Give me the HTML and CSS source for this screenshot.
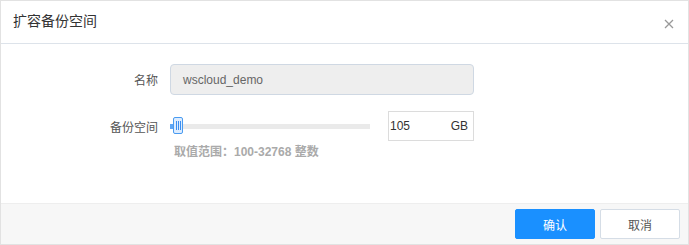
FILE: index.html
```html
<!DOCTYPE html>
<html lang="zh-CN">
<head>
<meta charset="utf-8">
<title>扩容备份空间</title>
<link rel="stylesheet" href="styles.css">
</head>
<body>
<div class="dialog">
  <div class="header">
    <span class="title">扩容备份空间</span>
    <span class="close">
      <svg width="10" height="10" viewBox="0 0 10 10"><path d="M1 1L9 9M9 1L1 9" stroke="#999" stroke-width="1.3" fill="none"/></svg>
    </span>
  </div>
  <div class="body">
    <div class="row row-name">
      <label class="label">名称</label>
      <div class="input disabled">wscloud_demo</div>
    </div>
    <div class="row row-size">
      <label class="label">备份空间</label>
      <div class="slider">
        <div class="track"><div class="fill"></div></div>
        <div class="handle"><i></i><i></i><i></i></div>
      </div>
      <div class="num-input"><span>105</span><span>GB</span></div>
    </div>
    <div class="hint">取值范围：100-32768 整数</div>
  </div>
  <div class="footer">
    <button class="btn primary">确认</button>
    <button class="btn">取消</button>
  </div>
</div>
</body>
</html>
```
FILE: styles.css
```css
* { box-sizing: border-box; }
html, body { margin: 0; padding: 0; background: #fff; }
body {
  font-family: "Liberation Sans", "Noto Sans CJK SC", Arial, sans-serif;
  font-size: 12px;
  color: #333;
}
.dialog {
  width: 689px;
  height: 245px;
  border: 1px solid #e2e2e2;
  display: flex;
  flex-direction: column;
}
.header {
  height: 43px;
  border-bottom: 1px solid #dde3ea;
  display: flex;
  align-items: center;
  justify-content: space-between;
  padding: 0 13px 0 12px;
}
.title {
  font-size: 14px;
  color: #333;
  margin-top: -4px;
}
.close { display: flex; margin-top: 3px; margin-right: 1px; }
.body {
  flex: 1;
  padding-top: 20px;
}
.row { display: flex; align-items: center; }
.label {
  width: 157px;
  text-align: right;
  color: #555;
  font-size: 12px;
  margin-right: 12px;
}
.input {
  width: 304px;
  height: 31px;
  border: 1px solid #cfd8e3;
  border-radius: 4px;
  background: #eee;
  font-size: 12px;
  color: #666;
  display: flex;
  align-items: center;
  padding-left: 12px;
}
.row-size { margin-top: 16px; }
.slider {
  position: relative;
  width: 200px;
  height: 18px;
  display: flex;
  align-items: center;
}
.track {
  width: 200px;
  height: 5px;
  background: #eaeaea;
}
.fill { width: 4px; height: 5px; background: #5ea6f5; }
.handle {
  position: absolute;
  left: 3px;
  top: 0;
  width: 10px;
  height: 17px;
  border: 1px solid #4a9bf0;
  border-radius: 2px;
  background: #dcecff;
  display: flex;
  justify-content: center;
  align-items: center;
  gap: 1px;
}
.handle i {
  display: block;
  width: 1px;
  height: 9px;
  background: #3b8ef0;
}
.num-input {
  margin-left: 18px;
  width: 86px;
  height: 30px;
  border: 1px solid #dcdcdc;
  display: flex;
  align-items: center;
  justify-content: space-between;
  padding: 0 5px 0 1px;
  font-size: 12px;
  color: #333;
}
.hint {
  margin-left: 173px;
  margin-top: 1px;
  color: #aaa;
  font-size: 12px;
  font-weight: bold;
}
.footer {
  height: 41px;
  background: #f7f7f7;
  border-top: 1px solid #eeeeee;
  display: flex;
  justify-content: flex-end;
  align-items: center;
  gap: 5px;
  padding-right: 8px;
}
.btn {
  width: 80px;
  height: 30px;
  border: 1px solid #d5dde6;
  border-radius: 2px;
  background: #fff;
  color: #555;
  font-family: "Noto Sans CJK SC", "Liberation Sans", sans-serif;
  font-size: 12px;
  cursor: pointer;
  padding: 0;
}
.btn.primary {
  background: #1a90ff;
  border-color: #1a90ff;
  color: #fff;
}
```
